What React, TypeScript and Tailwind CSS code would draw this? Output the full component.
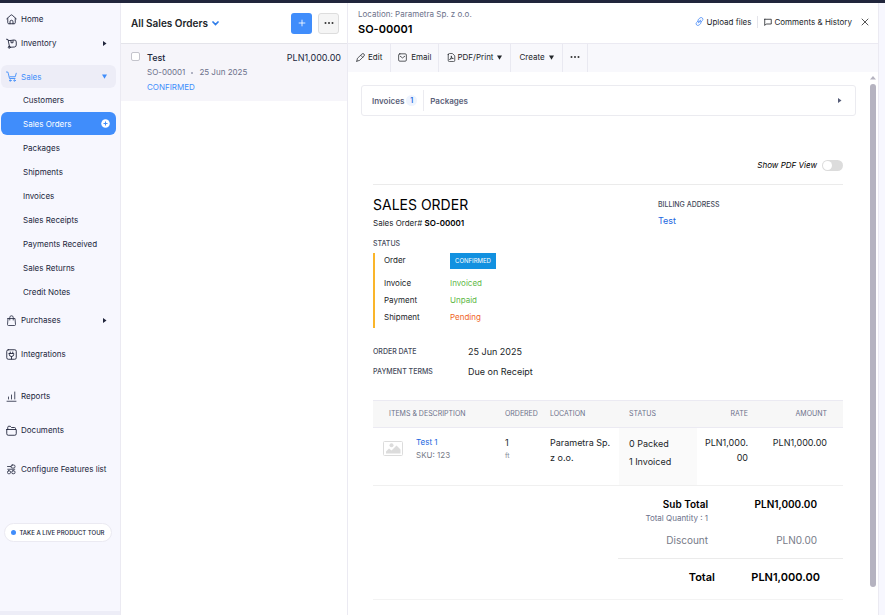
import { clsx, type ClassValue } from "clsx";
import { Plus, X } from "lucide-react";
import React from "react";
import { twMerge } from "tailwind-merge";

function cn(...inputs: ClassValue[]) {
  return twMerge(clsx(inputs));
}

type IconProps = { className?: string; children?: React.ReactNode };

/* Icons: 22x22 grid, stroked with the current color */
const Icon = ({ className, children }: IconProps) => (
  <svg
    viewBox="0 0 22 22"
    fill="none"
    stroke="currentColor"
    strokeWidth="1.800"
    strokeLinecap="round"
    strokeLinejoin="round"
    aria-hidden="true"
    className={cn("size-[11px] shrink-0", className)}
  >
    {children}
  </svg>
);

const HomeIcon = () => (
  <Icon>
    <path d="M1.500 9.500 9.600 2.400a2 2 0 0 1 2.800 0l8.100 7.100" />
    <path d="M3.500 9v8.500a2 2 0 0 0 2 2h11a2 2 0 0 0 2-2V9" />
    <path d="M8 19.500v-4a3 3 0 0 1 6 0v4" />
  </Icon>
);

const InventoryIcon = () => (
  <Icon>
    <path d="M1 2.500 4 3l3 14.500" />
    <path d="M5 5c5 .5 8-1 11-1a4 4 0 0 1 4.500 4v6a4 4 0 0 1-3.500 4l-8 .5" />
    <path d="M10 5v4.500h4V5" />
    <circle cx="6.500" cy="18.500" r="2" />
  </Icon>
);

const CartIcon = () => (
  <Icon>
    <path d="M1 2h2.500l1 2.500L7 15h11" />
    <path d="M8 11.500h10.500l2-7" />
    <circle cx="8.500" cy="19" r="1.500" />
    <circle cx="17" cy="19" r="1.500" />
  </Icon>
);

const BagIcon = () => (
  <Icon>
    <path d="M4 7h14l1 12a2 2 0 0 1-2 2H5a2 2 0 0 1-2-2L4 7Z" strokeWidth="1.600" />
    <path d="M7.500 10V5a3.500 3.500 0 0 1 7 0v5" strokeWidth="1.600" />
  </Icon>
);

const PlugIcon = () => (
  <Icon>
    <rect x="1.500" y="1.500" width="19" height="19" rx="3" />
    <path d="M6.500 9h9v1.500a4.500 4.500 0 0 1-9 0V9ZM8.500 9V6M13.500 9V6M11 15v5" />
  </Icon>
);

const ReportsIcon = () => (
  <Icon>
    <path d="M2 20.500h18M5 16v-4M11 16V8M17.500 16V2" strokeWidth="1.600" />
  </Icon>
);

const FolderIcon = () => (
  <Icon>
    <path d="M3.500 9V4.500a2 2 0 0 1 2-2h3l2.500 2.500h6a2 2 0 0 1 2 2v2" />
    <path d="M1.500 9h19v8.500a3 3 0 0 1-3 3h-13a3 3 0 0 1-3-3V9Z" />
  </Icon>
);

const FeaturesIcon = () => (
  <Icon>
    <g strokeWidth="1.600">
      <path d="M3 5h7" />
      <rect x="10" y="2" width="8" height="6" rx="2.500" />
      <path d="M3.500 10.500h14" />
      <rect x="3" y="13.500" width="6" height="6" rx="2.500" />
      <rect x="11.500" y="13.500" width="6.500" height="6" rx="2.500" />
    </g>
  </Icon>
);

const PencilIcon = () => (
  <Icon className="size-[9px]">
    <path d="m2 20 1.500-7L14.500 2.500a3.500 3.500 0 0 1 5 5L9 18l-7 2ZM12 6l4.500 4.500" />
  </Icon>
);

const MailIcon = () => (
  <Icon className="size-[9px]">
    <rect x="1.500" y="2" width="19" height="18" rx="3" />
    <path d="m5.500 8 5.500 4 5.500-4" />
  </Icon>
);

const PdfIcon = () => (
  <Icon className="size-[9px]">
    <path d="M3 4a3 3 0 0 1 3-3h7l6 6v11a3 3 0 0 1-3 3H6a3 3 0 0 1-3-3V4Z" />
    <path d="M7 15.500c3-1 4.500-6 3.500-8.500-.5 4 2 6.500 5 6.500-3-.5-6 .5-8.500 2Z" />
  </Icon>
);

const LinkIcon = () => (
  <Icon className="size-[9px] text-[#3b82f6]">
    <path d="M9 13 7.500 9.500a4 4 0 0 1 1-4L12 2.500a4.200 4.200 0 0 1 6 6l-3 3.500" />
    <path d="m13 9 1.500 3.500a4 4 0 0 1-1 4L10 19.500a4.200 4.200 0 0 1-6-6L7 10M8.500 14.500l5-7" />
  </Icon>
);

const CommentIcon = () => (
  <Icon className="size-2">
    <path d="M2 3.500h18v13H6L2 20.500v-17Z" strokeLinejoin="miter" strokeWidth="2.200" />
  </Icon>
);

const ImageIcon = () => (
  <svg viewBox="0 0 40 30" aria-hidden="true" className="h-[15px] w-5 shrink-0">
    <rect x="1" y="1" width="38" height="28" rx="2" fill="#fff" stroke="#dcdcdc" strokeWidth="2" />
    <circle cx="17" cy="8.500" r="4" fill="#dcdcdc" />
    <path d="M6 25v-4l6-6 5 4 10-10 8 8v8H6Z" fill="#dcdcdc" />
  </svg>
);

const PlusCircleIcon = () => (
  <svg viewBox="0 0 18 18" aria-hidden="true" className="size-[9px]">
    <circle cx="9" cy="9" r="8.500" fill="#fff" />
    <path d="M9 5v8M5 9h8" stroke="#408dfb" strokeWidth="2" />
  </svg>
);

const Chevron = () => (
  <svg viewBox="0 0 14 10" fill="none" aria-hidden="true" className="h-[5px] w-[7px]">
    <path d="m2 2 5 5 5-5" stroke="#2f7de9" strokeWidth="3.500" strokeLinecap="round" />
  </svg>
);

const Caret = ({ className, right }: { className?: string; right?: boolean }) => (
  <svg viewBox="0 0 10 10" aria-hidden="true" className={cn("size-[5px] fill-current", className)}>
    {right ? <path d="M2 0v10l7-5Z" /> : <path d="M0 1h10L5 9.500Z" />}
  </svg>
);

const Dots = () => (
  <svg viewBox="0 0 20 4" aria-hidden="true" className="h-0.5 w-2.5 fill-[#333]">
    <circle cx="3" cy="2" r="2" />
    <circle cx="10" cy="2" r="2" />
    <circle cx="17" cy="2" r="2" />
  </svg>
);

interface NavItemProps {
  icon: React.ReactNode;
  label: string;
  caret?: "right" | "down";
  className?: string;
}

const NavItem = ({ icon, label, caret, className }: NavItemProps) => (
  <a
    href="#"
    className={cn("flex h-6 items-center gap-1 rounded-md pr-[9px] pl-[5px]", className)}
  >
    {icon}
    <span className="grow whitespace-nowrap">{label}</span>
    {caret && <Caret right={caret === "right"} />}
  </a>
);

const salesItems = [
  "Customers",
  "Sales Orders",
  "Packages",
  "Shipments",
  "Invoices",
  "Sales Receipts",
  "Payments Received",
  "Sales Returns",
  "Credit Notes",
];

function Sidebar() {
  return (
    <aside className="flex w-[121px] shrink-0 flex-col border-r border-[#ebeaf2] bg-[#f7f7fe]">
      <nav className="flex flex-col pt-1 pr-1 pl-px text-[8px] text-[#21263c]">
        <NavItem icon={<HomeIcon />} label="Home" />
        <NavItem icon={<InventoryIcon />} label="Inventory" caret="right" />
        <NavItem
          icon={<CartIcon />}
          label="Sales"
          caret="down"
          className="mt-2.5 h-[23px] bg-[#ededf7] text-[#408dfb]"
        />
        <ul className="flex flex-col gap-px">
          {salesItems.map((item) => {
            const active = item === "Sales Orders";
            return (
              <li key={item}>
                <a
                  href="#"
                  className={cn(
                    "flex h-[23px] items-center justify-between rounded-md pr-1.5 pl-[22px]",
                    active && "bg-[#408dfb] text-white",
                  )}
                >
                  {item}
                  {active && <PlusCircleIcon />}
                </a>
              </li>
            );
          })}
        </ul>
        <NavItem icon={<BagIcon />} label="Purchases" caret="right" className="mt-[5px]" />
        <NavItem icon={<PlugIcon />} label="Integrations" className="mt-2.5" />
        <NavItem icon={<ReportsIcon />} label="Reports" className="mt-[18px]" />
        <NavItem icon={<FolderIcon />} label="Documents" className="mt-2.5" />
        <NavItem icon={<FeaturesIcon />} label="Configure Features list" className="mt-[15px]" />
      </nav>
      <button className="mt-[42px] mr-2 ml-1 flex h-[19px] items-center justify-center gap-[3px] rounded-full border border-[#ebeaf2] bg-white text-[6px] font-medium whitespace-nowrap text-[#21263c]">
        <span className="size-[5px] rounded-full bg-[#408dfb]" />
        TAKE A LIVE PRODUCT TOUR
      </button>
      <div className="mt-auto h-1 bg-[#ededf7]" />
    </aside>
  );
}

function OrderList() {
  return (
    <section className="w-[227px] shrink-0 border-r border-[#ebeaf2]">
      <header className="flex h-[41px] items-center justify-between border-b border-[#e4e4ea] pr-2 pl-2.5">
        <button className="flex items-center gap-1 text-[10px] font-semibold text-[#212529]">
          All Sales Orders
          <Chevron />
        </button>
        <div className="flex gap-1.5">
          <button
            aria-label="New sales order"
            className="flex size-[21px] items-center justify-center rounded-[3px] bg-[#408dfb] text-white"
          >
            <Plus className="size-2.5" strokeWidth={2} />
          </button>
          <button
            aria-label="More"
            className="flex size-[21px] items-center justify-center rounded-[3px] border border-[#dddddd] bg-[#f5f5f5]"
          >
            <Dots />
          </button>
        </div>
      </header>
      <div className="flex gap-[7px] bg-[#f6f5fa] py-1.5 pr-1.5 pl-2.5">
        <input
          type="checkbox"
          aria-label="Select SO-00001"
          className="mt-0.5 size-[9px] shrink-0 appearance-none rounded-[2px] border border-[#c4c4cc] bg-white checked:bg-[#408dfb]"
        />
        <div className="grow leading-[15px]">
          <div className="flex justify-between text-[#21263c]">
            <span className="font-medium">Test</span>
            <span>PLN1,000.00</span>
          </div>
          <div className="flex items-center gap-1.5 text-[8px] leading-[15px] text-[#6c718a]">
            <a href="#">SO-00001</a>
            <span className="size-0.5 rounded-full bg-[#9a9db0]" />
            25 Jun 2025
          </div>
          <div className="text-[8px] leading-[15px] text-[#408dfb]">CONFIRMED</div>
        </div>
      </div>
    </section>
  );
}

const ToolButton = ({ className, ...props }: React.ButtonHTMLAttributes<HTMLButtonElement>) => (
  <button
    {...props}
    className={cn(
      "flex items-center border-r border-[#e9e9f1] px-2 pb-0.5 whitespace-nowrap text-[#212529]",
      className,
    )}
  />
);

const statuses = [
  { label: "Invoice", value: "Invoiced", color: "text-[#5fb947]" },
  { label: "Payment", value: "Unpaid", color: "text-[#5fb947]" },
  { label: "Shipment", value: "Pending", color: "text-[#f0651f]" },
];

function OrderSummary() {
  return (
    <div className="flex border-t border-[#ebebeb] pt-2.5">
      <div className="w-[285px] shrink-0">
        <h2 className="text-[14px] leading-5 text-black">SALES ORDER</h2>
        <p className="text-[8px] leading-4">
          Sales Order# <b className="font-semibold text-black">SO-00001</b>
        </p>
        <h3 className="mt-2 text-[7px] leading-[10px] font-medium text-[#444a5a]">STATUS</h3>
        <dl className="mt-1 border-l-2 border-[#fab52a] pb-0.5 pl-[9px] text-[8px] leading-[17px] text-[#212529]">
          <div className="flex items-start pb-1.5">
            <dt className="w-[66px] leading-[14px]">Order</dt>
            <dd className="bg-[#1291e0] px-[5px] text-[6px] leading-4 text-white">CONFIRMED</dd>
          </div>
          {statuses.map((s) => (
            <div key={s.label} className="flex">
              <dt className="w-[66px]">{s.label}</dt>
              <dd className={s.color}>{s.value}</dd>
            </div>
          ))}
        </dl>
        <dl className="mt-3.5 leading-5">
          <div className="flex">
            <dt className="w-[95px] text-[7px] leading-5 font-medium text-[#444a5a]">ORDER DATE</dt>
            <dd className="text-[#212529]">25 Jun 2025</dd>
          </div>
          <div className="flex">
            <dt className="w-[95px] text-[7px] leading-5 font-medium text-[#444a5a]">PAYMENT TERMS</dt>
            <dd className="text-[#212529]">Due on Receipt</dd>
          </div>
        </dl>
      </div>
      <div>
        <h3 className="mt-1 text-[7px] leading-3 font-medium text-[#444a5a]">BILLING ADDRESS</h3>
        <a href="#" className="mt-0.5 block leading-4 text-[#2268e0]">
          Test
        </a>
      </div>
    </div>
  );
}

function ItemsTable() {
  return (
    <table className="mt-[18px] w-full table-fixed text-left text-[#212529]">
      <colgroup>
        <col />
        <col className="w-[45px]" />
        <col className="w-[77px]" />
        <col className="w-[78px]" />
        <col className="w-[59px]" />
        <col className="w-[87px]" />
      </colgroup>
      <thead>
        <tr className="h-[27px] border-y border-[#ebeaf2] bg-[#f7f7f7] text-[7px] text-[#6c718a] [&>th]:font-normal">
          <th className="pl-4">ITEMS & DESCRIPTION</th>
          <th className="pl-2">ORDERED</th>
          <th className="pl-2">LOCATION</th>
          <th className="pl-2.5">STATUS</th>
          <th className="pr-2 text-right">RATE</th>
          <th className="pr-4 text-right">AMOUNT</th>
        </tr>
      </thead>
      <tbody>
        <tr className="h-[58px] border-b border-[#f0f0f0] align-top leading-[15px] [&>td]:pt-[7px]">
          <td>
            <div className="flex gap-[13px] pl-2.5 text-[8px] leading-[13px]">
              <span className="pt-1.5">
                <ImageIcon />
              </span>
              <div className="pt-px">
                <a href="#" className="text-[#2268e0]">
                  Test 1
                </a>
                <div className="text-[#777b88]">SKU: 123</div>
              </div>
            </div>
          </td>
          <td className="pl-2">
            1<div className="text-[7px] leading-3 text-[#888c99]">ft</div>
          </td>
          <td className="px-2">Parametra Sp. z o.o.</td>
          <td className="bg-[#fafafa] pl-2.5 leading-[18px]">
            <div>0 Packed</div>
            <div>1 Invoiced</div>
          </td>
          <td className="pr-2 text-right">
            PLN1,000.
            <wbr />
            00
          </td>
          <td className="pr-4 text-right">PLN1,000.00</td>
        </tr>
      </tbody>
    </table>
  );
}

function Totals() {
  return (
    <dl className="border-b border-[#f3f3f3] pt-2.5 text-right text-[10px]">
      <div className="ml-auto w-[225px]">
        <div className="flex pr-[26px] font-semibold text-black">
          <dt className="w-[90px] leading-4">
            Sub Total
            <div className="text-[8px] leading-3 font-normal whitespace-nowrap text-[#6c718a]">
              Total Quantity : 1
            </div>
          </dt>
          <dd className="grow leading-4">PLN1,000.00</dd>
        </div>
        <div className="flex border-b border-[#ebebeb] pt-2 pr-[26px] pb-2.5 text-[#777b88]">
          <dt className="w-[90px] leading-4">Discount</dt>
          <dd className="grow leading-4">PLN0.00</dd>
        </div>
        <div className="flex pt-2.5 pr-[23px] pb-3.5 text-[11px] font-semibold text-black">
          <dt className="w-[97px] leading-4">Total</dt>
          <dd className="grow leading-4">PLN1,000.00</dd>
        </div>
      </div>
    </dl>
  );
}

function OrderDetail() {
  return (
    <main className="flex min-w-0 grow flex-col">
      <header className="flex h-[41px] items-center justify-between border-b border-[#ebeaf2] pr-[7px] pb-px pl-2.5">
        <div>
          <p className="text-[8px] leading-3 text-[#6c718a]">Location: Parametra Sp. z o.o.</p>
          <h1 className="text-[11px] leading-[18px] font-semibold text-black">SO-00001</h1>
        </div>
        <div className="flex items-center pb-0.5 text-[8px] whitespace-nowrap text-[#212529]">
          <button className="flex items-center gap-0.5 border-r border-[#e4e4ea] pr-1.5">
            <LinkIcon />
            Upload files
          </button>
          <button className="flex items-center gap-0.5 pl-1.5">
            <CommentIcon />
            Comments & History
          </button>
          <button aria-label="Close" className="ml-[7px]">
            <X className="size-3 text-[#555]" strokeWidth={2} />
          </button>
        </div>
      </header>

      <div className="flex h-7 bg-[#f8f8fc] text-[8px]">
        <ToolButton className="gap-[3px]">
          <PencilIcon />
          Edit
        </ToolButton>
        <ToolButton className="gap-1 px-[7px]">
          <MailIcon />
          Email
        </ToolButton>
        <ToolButton className="gap-px">
          <PdfIcon />
          PDF/Print
          <Caret className="ml-[3px]" />
        </ToolButton>
        <ToolButton className="gap-1">
          Create
          <Caret />
        </ToolButton>
        <ToolButton aria-label="More actions" className="px-[7px]">
          <Dots />
        </ToolButton>
      </div>

      <div className="flex grow">
        <div className="min-w-0 grow pt-[13px] pr-3 pb-3 pl-[13px]">
          <div className="flex h-[31px] items-center rounded-[3px] border border-[#ebebf0] pr-[13px] pl-2.5 text-[8px] font-semibold text-[#5a6078]">
            <button className="flex items-center gap-0.5">
              Invoices
              <span className="flex size-[11px] items-center justify-center rounded-full bg-[#eef4fe] text-[7px] text-[#2268e0]">
                1
              </span>
            </button>
            <span className="mx-1.5 h-[21px] w-px bg-[#ebebf0]" />
            <button>Packages</button>
            <Caret right className="ml-auto text-[#555c77]" />
          </div>

          <div className="pr-[13px] pl-3">
            <label className="mt-[43px] flex items-center justify-end gap-[5px] pb-[13px] text-[8px] leading-3 text-black italic">
              Show PDF View
              <input
                type="checkbox"
                className="flex h-[11px] w-[21px] appearance-none items-center rounded-full bg-[#dcdcdc] px-px before:size-[9px] before:rounded-full before:bg-white checked:justify-end checked:bg-[#408dfb]"
              />
            </label>
            <OrderSummary />
            <ItemsTable />
            <Totals />
          </div>
        </div>

        {/* scroll track */}
        <div className="flex w-2.5 shrink-0 flex-col items-center pt-1 pb-7">
          <svg viewBox="0 0 12 8" aria-hidden="true" className="mb-1 h-1 w-1.5 fill-[#b5b3c0]">
            <path d="M6 0l6 7H0Z" />
          </svg>
          <div className="w-1.5 grow rounded-full bg-[#b5b3c0]" />
        </div>
      </div>
    </main>
  );
}

export default function App() {
  return (
    <div className="flex min-h-screen flex-col bg-white font-['Inter',sans-serif] text-[9px] leading-3 text-[#212529]">
      <div className="h-[3px] bg-[#21263c]" />
      <div className="flex grow">
        <Sidebar />
        <OrderList />
        <OrderDetail />
        <div className="w-[7px] shrink-0 border-l border-[#ebeaf2] bg-[#f7f7fe]" />
      </div>
    </div>
  );
}
